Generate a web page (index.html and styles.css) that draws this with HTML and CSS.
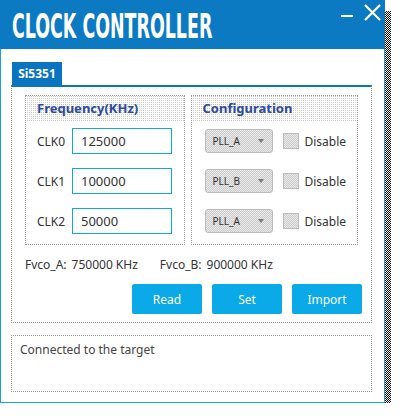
FILE: index.html
```html
<!DOCTYPE html>
<html lang="en">
<head>
    <meta charset="UTF-8">
    <title>Clock Controller</title>
    <link rel="stylesheet" href="styles.css">
</head>
<body>
    <div class="window">
        <div class="titlebar">
            <div class="title-wrap">
                <span class="title">CLOCK CONTROLLER</span>
            </div>
            <div class="controls">
                <svg class="btn-min" width="14" height="20" viewBox="0 0 14 20">
                    <rect x="1" y="14" width="12" height="2" fill="#fff"/>
                </svg>
                <svg class="btn-close" width="19" height="18" viewBox="0 0 19 18">
                    <path d="M2 2 L17 17 M17 2 L2 17" stroke="#fff" stroke-width="2.2" fill="none"/>
                </svg>
            </div>
        </div>

        <div class="content">
            <div class="tab">Si5351</div>
            <div class="tab-panel">
                <div class="groups">
                    <div class="group group-freq">
                        <div class="group-head">Frequency(KHz)</div>
                        <div class="group-body">
                            <div class="row">
                                <label for="clk0">CLK0</label>
                                <input type="text" id="clk0" value="125000">
                            </div>
                            <div class="row">
                                <label for="clk1">CLK1</label>
                                <input type="text" id="clk1" value="100000">
                            </div>
                            <div class="row">
                                <label for="clk2">CLK2</label>
                                <input type="text" id="clk2" value="50000">
                            </div>
                        </div>
                    </div>
                    <div class="group group-config">
                        <div class="group-head">Configuration</div>
                        <div class="group-body">
                            <div class="row">
                                <div class="combo"><span>PLL_A</span><span class="arrow"></span></div>
                                <span class="check"></span>
                                <span class="check-label">Disable</span>
                            </div>
                            <div class="row">
                                <div class="combo"><span>PLL_B</span><span class="arrow"></span></div>
                                <span class="check"></span>
                                <span class="check-label">Disable</span>
                            </div>
                            <div class="row">
                                <div class="combo"><span>PLL_A</span><span class="arrow"></span></div>
                                <span class="check"></span>
                                <span class="check-label">Disable</span>
                            </div>
                        </div>
                    </div>
                </div>

                <div class="fvco">
                    <span class="fvco-name">Fvco_A:</span>
                    <span class="fvco-val">750000 KHz</span>
                    <span class="fvco-name">Fvco_B:</span>
                    <span class="fvco-val">900000 KHz</span>
                </div>

                <div class="actions">
                    <button>Read</button>
                    <button>Set</button>
                    <button>Import</button>
                </div>
            </div>

            <div class="log">Connected to the target</div>
        </div>
    </div>
</body>
</html>
```

FILE: styles.css
```css
body {
    margin: 0;
    padding: 0;
    background-color: #ffffff;
    font-family: "Noto Sans", "Open Sans", sans-serif;
    color: #333333;
}

.window {
    position: relative;
    width: 385px;
    height: 403px;
    box-sizing: border-box;
    border: 1px solid #16a2e0;
    background-color: #ffffff;
}

/* checkered drop shadow */
.window::before {
    content: "";
    position: absolute;
    left: 10px;
    top: 10px;
    width: 380px;
    height: 398px;
    z-index: -1;
    background: conic-gradient(#000 25%, #fff 0 50%, #000 0 75%, #fff 0) 0 0 / 2px 2px;
}

.titlebar {
    height: 49px;
    background-color: #0b7ac3;
    display: flex;
    margin: -1px -1px 0 -1px;
    padding-left: 12px;
}

.title-wrap {
    flex: 1;
    min-width: 0;
    padding-top: 3px;
}

.title {
    display: inline-block;
    font-family: "DejaVu Sans Condensed", "DejaVu Sans", sans-serif;
    font-stretch: condensed;
    font-weight: bold;
    font-size: 34px;
    line-height: 46px;
    color: #ffffff;
    transform: scaleX(0.57);
    transform-origin: left center;
    white-space: nowrap;
}

.controls {
    display: flex;
    align-items: flex-start;
    gap: 9px;
    padding-right: 3px;
}

.btn-min {
    margin-top: 1px;
}

.btn-close {
    margin-top: 3px;
}

.content {
    padding: 13px 11px 0 10px;
}

.tab {
    margin-left: 1px;
    width: 50px;
    height: 23px;
    background-color: #0a74c0;
    color: #ffffff;
    font-size: 12px;
    font-weight: bold;
    line-height: 23px;
    text-align: center;
}

.tab-panel {
    border: 1px dotted #999999;
    border-top: 2px solid #0a74c0;
    margin-right: 1px;
    padding: 8px 13px 8px 13px;
}

.groups {
    display: flex;
    gap: 6px;
}

.group {
    border: 1px dotted #999999;
    height: 148px;
}

.group-freq {
    width: 158px;
}

.group-config {
    width: 166px;
}

.group-head {
    height: 25px;
    padding-left: 11px;
    font-size: 13px;
    font-weight: bold;
    line-height: 25px;
    color: #2c4ba0;
    background: conic-gradient(#c9c9c9 25%, #ffffff 0) 0 0 / 2px 2px;
}

.group-body {
    display: flex;
    flex-direction: column;
    gap: 14px;
    padding-top: 7px;
}

.row {
    display: flex;
    align-items: center;
    height: 26px;
}

.group-freq .row {
    padding-left: 11px;
}

.row label {
    width: 35px;
    font-size: 12px;
    color: #333333;
}

.row input[type="text"] {
    width: 100px;
    height: 26px;
    box-sizing: border-box;
    border: 1px solid #12a6e2;
    padding: 0 8px;
    font-family: "Noto Sans", "Open Sans", sans-serif;
    font-size: 13px;
    color: #333333;
    outline: none;
}

.group-config .row {
    padding-left: 13px;
}

.combo {
    width: 68px;
    height: 24px;
    box-sizing: border-box;
    border: 1px solid #bbbbbb;
    border-radius: 3px;
    background: conic-gradient(#cccccc 25%, #e9e9e9 0 50%, #cccccc 0 75%, #e9e9e9 0) 0 0 / 2px 2px;
    display: flex;
    align-items: center;
    justify-content: space-between;
    padding: 0 8px 0 7px;
    font-size: 10px;
    color: #333333;
}

.arrow {
    width: 0;
    height: 0;
    border-left: 3px solid transparent;
    border-right: 3px solid transparent;
    border-top: 4px solid #777777;
}

.check {
    width: 16px;
    height: 16px;
    box-sizing: border-box;
    margin-left: 10px;
    border: 1px solid #bbbbbb;
    background: conic-gradient(#cccccc 25%, #e9e9e9 0 50%, #cccccc 0 75%, #e9e9e9 0) 0 0 / 2px 2px;
}

.check-label {
    margin-left: 6px;
    font-size: 12px;
    color: #333333;
}

.fvco {
    display: flex;
    align-items: center;
    height: 24px;
    margin-top: 7px;
    font-size: 12px;
    color: #333333;
}

.fvco-name {
    margin-right: 5px;
}

.fvco-val {
    margin-right: 22px;
}

.actions {
    display: flex;
    justify-content: flex-end;
    gap: 10px;
    margin-top: 8px;
    margin-right: -4px;
}

.actions button {
    width: 70px;
    height: 30px;
    border: none;
    border-radius: 2px;
    background-color: #0aa9e8;
    color: #ffffff;
    font-family: "Noto Sans", "Open Sans", sans-serif;
    font-size: 12px;
    cursor: pointer;
}

.log {
    margin-top: 12px;
    margin-right: 1px;
    height: 57px;
    box-sizing: border-box;
    border: 1px dotted #999999;
    padding: 5px 8px;
    font-size: 12px;
    color: #444444;
}
```
